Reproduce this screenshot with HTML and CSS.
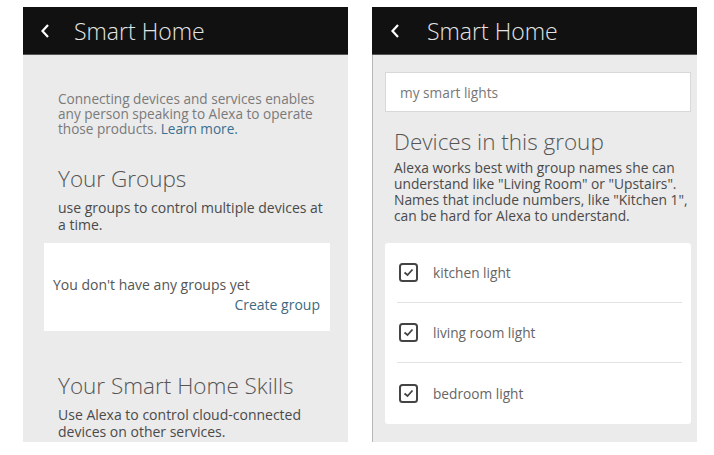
FILE: index.html
```html
<!DOCTYPE html>
<html>
<head>
<meta charset="utf-8">
<link rel="stylesheet" href="styles.css">
</head>
<body>
<div class="screens">
  <section class="phone">
    <header class="bar">
      <svg class="back" width="10" height="16" viewBox="0 0 10 16"><path d="M8 2 L2.5 8 L8 14" fill="none" stroke="#fff" stroke-width="2.2"/></svg>
      <span class="title">Smart Home</span>
    </header>
    <div class="body left-body">
      <p class="intro">Connecting devices and services enables any person speaking to Alexa to operate those products. <span class="link">Learn more.</span></p>
      <h2 class="heading groups-h">Your Groups</h2>
      <p class="desc">use groups to control multiple devices at a time.</p>
      <div class="card empty">
        <div class="empty-text">You don't have any groups yet</div>
        <div class="create">Create group</div>
      </div>
      <h2 class="heading skills-h">Your Smart Home Skills</h2>
      <p class="desc">Use Alexa to control cloud-connected devices on other services.</p>
    </div>
  </section>
  <section class="phone">
    <header class="bar bar-right">
      <svg class="back" width="10" height="16" viewBox="0 0 10 16"><path d="M8 2 L2.5 8 L8 14" fill="none" stroke="#fff" stroke-width="2.2"/></svg>
      <span class="title">Smart Home</span>
    </header>
    <div class="body right-body">
      <div class="input">my smart lights</div>
      <h2 class="heading devices-h">Devices in this group</h2>
      <p class="desc tip">Alexa works best with group names she can understand like "Living Room" or "Upstairs". Names that include numbers, like "Kitchen 1", can be hard for Alexa to understand.</p>
      <div class="card list">
        <div class="row">
          <svg class="check" width="20" height="19" viewBox="0 0 20 19"><rect x="1" y="1" width="17" height="17" rx="2.5" fill="none" stroke="#444" stroke-width="2"/><path d="M5.5 9.5 L8.5 12 L13.5 6.5" fill="none" stroke="#444" stroke-width="1.8"/></svg>
          <span>kitchen light</span>
        </div>
        <div class="row">
          <svg class="check" width="20" height="19" viewBox="0 0 20 19"><rect x="1" y="1" width="17" height="17" rx="2.5" fill="none" stroke="#444" stroke-width="2"/><path d="M5.5 9.5 L8.5 12 L13.5 6.5" fill="none" stroke="#444" stroke-width="1.8"/></svg>
          <span>living room light</span>
        </div>
        <div class="row">
          <svg class="check" width="20" height="19" viewBox="0 0 20 19"><rect x="1" y="1" width="17" height="17" rx="2.5" fill="none" stroke="#444" stroke-width="2"/><path d="M5.5 9.5 L8.5 12 L13.5 6.5" fill="none" stroke="#444" stroke-width="1.8"/></svg>
          <span>bedroom light</span>
        </div>
      </div>
    </div>
  </section>
</div>
</body>
</html>
```
FILE: styles.css
```css
* { box-sizing: border-box; }
html, body { margin: 0; padding: 0; background: #fff; }
body { font-family: "Open Sans", "Noto Sans", sans-serif; width: 714px; height: 455px; overflow: hidden; }
.screens { display: flex; gap: 24px; padding: 7px 0 0 23px; }
.phone { width: 325px; height: 435px; display: flex; flex-direction: column; }
.bar { height: 48px; background: #111; display: flex; align-items: center; flex-shrink: 0; border-bottom: 1px solid #555; }
.back { margin-left: 17px; }
.title { color: #e4e4e4; font-size: 23px; font-weight: 300; margin-left: 24px; }
.bar-right .back { margin-left: 18px; }
.bar-right .title { margin-left: 27px; }
.body { flex: 1; background: #ebebeb; }
p, h2 { margin: 0; }
.left-body { padding: 36px 24px 0 35px; }
.intro { font-size: 13.6px; line-height: 15px; color: #7a7a7a; }
.link { color: #3a7090; display: inline-block; line-height: 15px; }
.heading { font-weight: 300; color: #555; font-size: 22.5px; line-height: 26px; }
.groups-h { margin-top: 30px; }
.desc { font-size: 14px; line-height: 17px; color: #4a4a4a; margin-top: 6.5px; }
.card { background: #fff; }
.empty { margin: 10.5px -6px 0 -14px; height: 88px; padding: 32.5px 10px 0 9px; }
.empty-text { font-size: 14px; color: #555; line-height: 17px; }
.create { text-align: right; font-size: 14px; color: #3d6a80; line-height: 17px; margin-top: 3px; }
.skills-h { margin-top: 42px; }
.right-body { padding: 17px 6px 0 12px; border-left: 1px solid #b5b5b5; }
.input { background: #fff; height: 40px; border: 1px solid #d8d8d8; padding-left: 14px; font-size: 13.7px; color: #777; display: flex; align-items: center; }
.devices-h { margin: 17px 0 0 9px; }
.tip { margin: 5px 0 0 9px; line-height: 16px; font-size: 13.8px; }
.list { margin-top: 19px; height: 181px; border-radius: 3px; padding: 0 9px 0 12px; }
.row { height: 60px; display: flex; align-items: center; gap: 14px; font-size: 13.7px; color: #666; border-bottom: 1px solid #e2e2e2; padding-left: 2px; }
.row:last-child { border-bottom: none; }
.check { flex-shrink: 0; }
```
